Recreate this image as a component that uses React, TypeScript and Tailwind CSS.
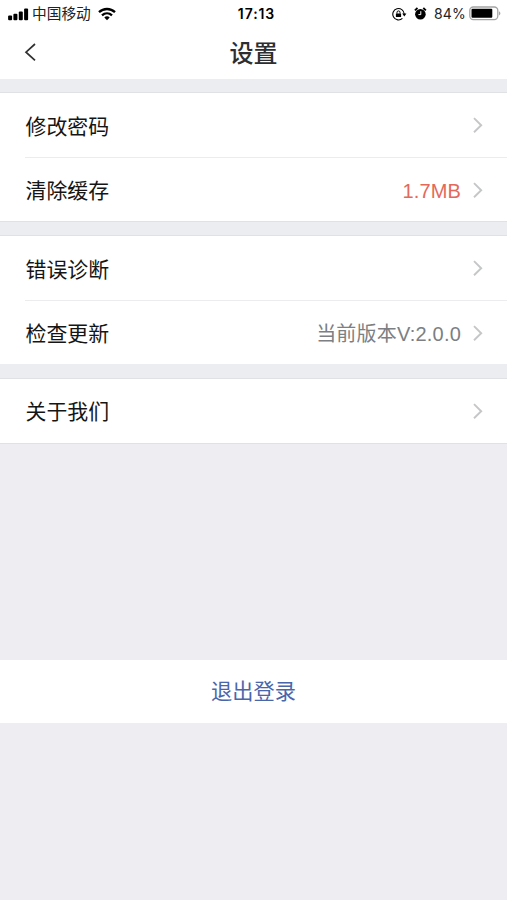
import React from "react";

function Chevron() {
  return (
    <svg className="ml-3 shrink-0" width="12" height="18" viewBox="0 0 12 18" fill="none" stroke="#c5c6c8" strokeWidth="1.9">
      <path d="M1 2.1 8.2 9.2 1 16.2" />
    </svg>
  );
}

interface RowProps {
  label: string;
  value?: string;
  valueClass?: string;
  divider?: boolean;
}

function Row({ label, value, valueClass = "", divider = false }: RowProps) {
  return (
    <div className={divider ? "ml-[25px] flex h-[65px] items-center border-b border-[#ececee] pr-[22px]" : "ml-[25px] flex h-[63px] items-center pr-[22px]"}>
      <span className="pt-[3px] pl-[0.5px] text-[20.9px] leading-6 text-[#151515]">{label}</span>
      <span className={"ml-auto pt-0.5 whitespace-nowrap leading-6 " + valueClass}>{value}</span>
      <Chevron />
    </div>
  );
}

function StatusBar() {
  return (
    <div className="grid h-7 grid-cols-[1fr_auto_1fr] items-center text-black">
      <div className="flex items-center pl-2">
        <svg width="21" height="13" viewBox="0 0 21 13" fill="currentColor">
          <rect x="0.1" y="7.4" width="4" height="4.8" rx="1" />
          <rect x="5.4" y="5.7" width="4" height="6.5" rx="1" />
          <rect x="10.8" y="3.4" width="4" height="8.8" rx="1" />
          <rect x="16.1" y="0.5" width="4" height="11.7" rx="1" />
        </svg>
        <span className="ml-[3px] text-[14.7px] leading-5 text-[#222]">中国移动</span>
        <svg className="mb-px ml-[7px]" width="18" height="14" viewBox="0 0 18 14" fill="none" stroke="currentColor" strokeWidth="2.3">
          <path d="M1 5.2C5.5.9 12.5.9 17 5.2" />
          <path d="M4 8.3c2.9-2.7 7.1-2.7 10 0" />
          <path d="M6.3 10.4c1.6-1.5 3.8-1.5 5.4 0L9 13.2z" fill="currentColor" stroke="none" />
        </svg>
      </div>
      <span className="translate-x-[3px] text-[14px] leading-5 font-semibold tracking-[0.9px] [font-family:Inter,sans-serif]">17:13</span>
      <div className="flex items-center justify-end pr-[6px]">
        <svg className="mb-px" width="15" height="14" viewBox="0 0 15 14" fill="none" stroke="currentColor" strokeWidth="1.1">
          <path d="M10.4 11.4A5.7 5.7 0 1 1 12.2 7" />
          <path d="M10.2 6.4h4.2L12.3 9.4z" fill="currentColor" stroke="none" />
          <rect x="3.9" y="6.4" width="5.2" height="3.7" rx=".4" fill="currentColor" stroke="none" />
          <path d="M5 6.6V5.4a1.5 1.5 0 0 1 3 0v1.2" strokeWidth="1" />
        </svg>
        <svg className="ml-[7px]" width="13" height="14" viewBox="0 0 13 14" fill="none" stroke="currentColor">
          <circle cx="6.4" cy="7.2" r="5.3" fill="currentColor" stroke="none" />
          <path d="M.9 3.4 3.5 1M9.3 1l2.6 2.4" strokeWidth="1.8" />
          <path d="M6.8 4.2v3.4H4.4" stroke="#fff" strokeWidth="1" />
        </svg>
        <span className="ml-[7px] text-[14px] leading-5 tracking-[0.2px] text-[#222] [font-family:Inter,sans-serif]">84%</span>
        <svg className="mb-px ml-[3px]" width="32" height="15" viewBox="0 0 32 15" fill="none">
          <rect x=".8" y="1" width="28" height="12.6" rx="3.5" stroke="#a4a4a4" strokeWidth="1.3" />
          <rect x="2.5" y="2.8" width="20.8" height="9" rx="1" fill="#000" />
          <path d="M30 5.2c1.9.8 1.9 3.4 0 4.2z" fill="#a4a4a4" />
        </svg>
      </div>
    </div>
  );
}

export default function App() {
  return (
    <main className="flex h-[900px] w-full flex-col bg-[#eeeef2] [font-family:'Liberation_Sans','Noto_Sans_CJK_SC',sans-serif]">
      <header className="h-[79px] bg-white">
        <StatusBar />
        <div className="grid h-12 grid-cols-[1fr_auto_1fr] items-center">
          <button aria-label="返回" className="ml-[24px] w-4">
            <svg width="13" height="20" viewBox="0 0 13 20" fill="none" stroke="#303030" strokeWidth="1.7">
              <path d="M11 2 2 10.2l9 8.2" />
            </svg>
          </button>
          <h1 className="text-[24px] leading-8 font-medium text-[#2d2e31] [font-family:'Noto_Sans_CJK_SC',sans-serif]">设置</h1>
        </div>
      </header>
      <div className="h-[13px] bg-[#ecedf0]" />
      <section className="border-y border-[#e0e1e4] bg-white">
        <Row label="修改密码" divider />
        <Row label="清除缓存" value="1.7MB" valueClass="text-[20px] tracking-[0.15px] text-[#e4695b]" />
      </section>
      <div className="h-[13px] bg-[#ecedf0]" />
      <section className="border-t border-[#e0e1e4] bg-white">
        <Row label="错误诊断" divider />
        <Row label="检查更新" value="当前版本V:2.0.0" valueClass="text-[20px] tracking-[0.2px] text-[#7c7f83]" />
      </section>
      <div className="h-[14px] bg-[#ecedf0]" />
      <section className="border-y border-[#e0e1e4] bg-white pb-px">
        <Row label="关于我们" />
      </section>
      <button className="mt-[216px] h-[63px] bg-white pt-px text-[21.2px] text-[#4a66ab]">退出登录</button>
    </main>
  );
}
